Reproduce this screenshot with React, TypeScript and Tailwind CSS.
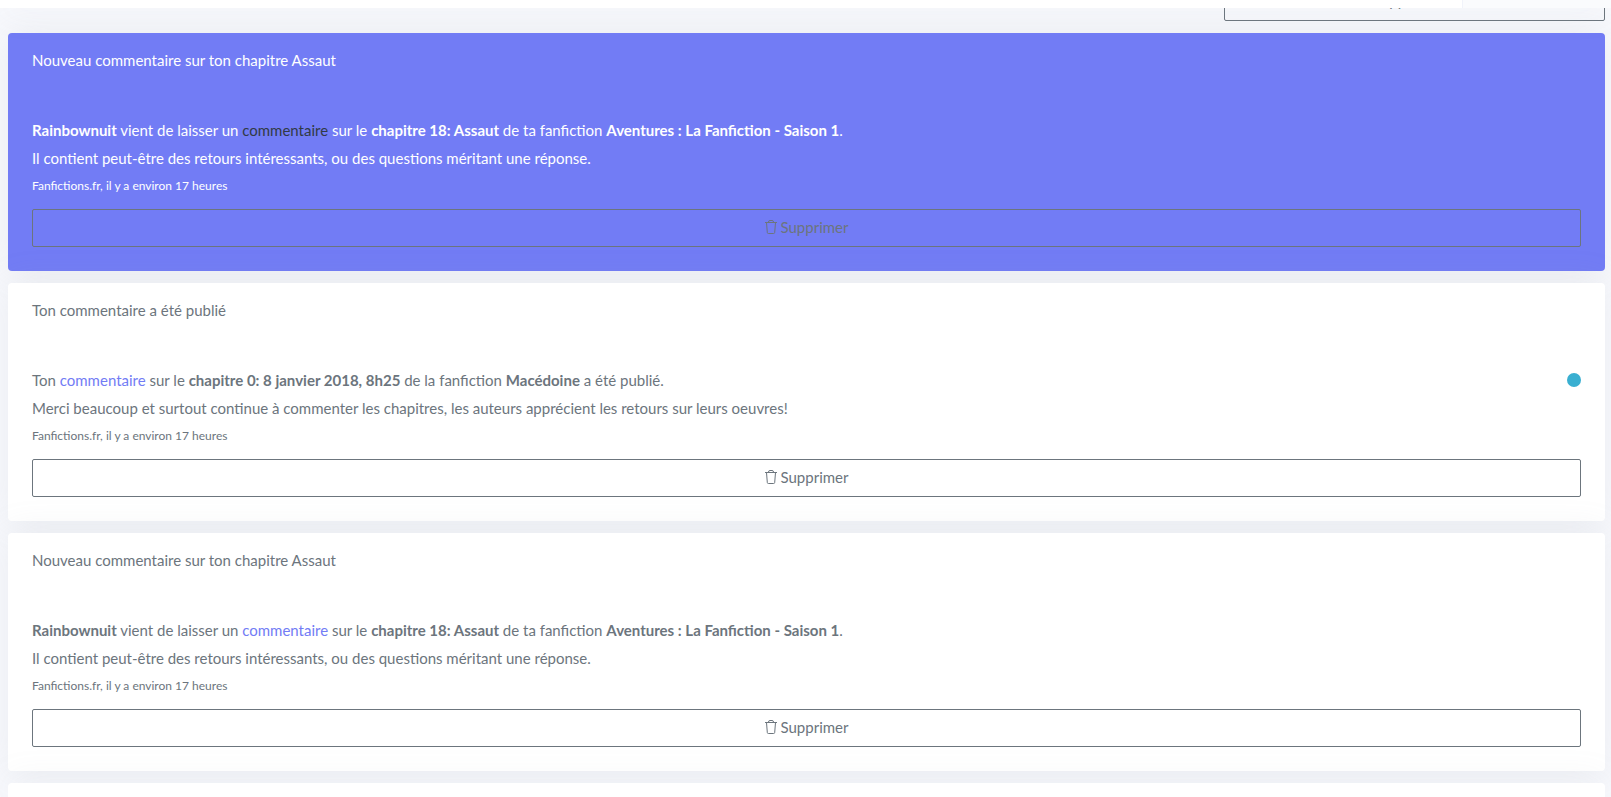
import type { ReactNode } from "react";
import clsx from "clsx";

type Notification = {
  id: number;
  title: string;
  unread?: boolean;
  badge?: boolean;
  message: ReactNode;
  detail: string;
};

function CommentLink({ unread }: { unread?: boolean }) {
  return (
    <a href="#commentaire" className={unread ? "text-[#313a46]" : "text-[#727cf5]"}>
      commentaire
    </a>
  );
}

function chapterMessage(unread?: boolean) {
  return (
    <>
      <strong>Rainbownuit</strong> vient de laisser un <CommentLink unread={unread} /> sur le{" "}
      <strong>chapitre 18: Assaut</strong> de ta fanfiction{" "}
      <strong>Aventures : La Fanfiction - Saison 1</strong>.
    </>
  );
}

const notifications: Notification[] = [
  {
    id: 1,
    title: "Nouveau commentaire sur ton chapitre Assaut",
    unread: true,
    message: chapterMessage(true),
    detail: "Il contient peut-être des retours intéressants, ou des questions méritant une réponse.",
  },
  {
    id: 2,
    title: "Ton commentaire a été publié",
    badge: true,
    message: (
      <>
        Ton <CommentLink /> sur le <strong>chapitre 0: 8 janvier 2018, 8h25</strong> de la
        fanfiction <strong>Macédoine</strong> a été publié.
      </>
    ),
    detail:
      "Merci beaucoup et surtout continue à commenter les chapitres, les auteurs apprécient les retours sur leurs oeuvres!",
  },
  {
    id: 3,
    title: "Nouveau commentaire sur ton chapitre Assaut",
    message: chapterMessage(),
    detail: "Il contient peut-être des retours intéressants, ou des questions méritant une réponse.",
  },
];

function TrashIcon() {
  return (
    <svg viewBox="0 0 12 14" className="h-3.5 w-3" fill="none" stroke="currentColor" aria-hidden="true">
      <path d="M0 2.5h12M3.5 2q0-1.5 1.5-1.5h2q1.5 0 1.5 1.5M1.5 2.5l.8 10q.1 1 1 1h5.4q.9 0 1-1l.8-10" />
    </svg>
  );
}

function NotificationCard({ notification }: { notification: Notification }) {
  const { title, unread, badge, message, detail } = notification;

  return (
    <article
      className={clsx(
        "rounded px-6 pt-[15px] pb-6 shadow-[0_0_35px_0_rgba(154,161,171,0.15)]",
        unread ? "bg-[#727cf5] text-white" : "bg-white"
      )}
    >
      <h2 className="leading-6">{title}</h2>
      <div className="mt-11 flex items-center justify-between leading-7">
        <p>{message}</p>
        {badge ? <span className="h-3.5 w-3.5 rounded-full bg-[#39afd1]" /> : null}
      </div>
      <p className="leading-7">{detail}</p>
      <p className="text-[12px] leading-7">Fanfictions.fr, il y a environ 17 heures</p>
      <button
        type="button"
        className="mt-[9px] flex h-[38px] w-full items-center justify-center gap-1 rounded-xs border border-[#6c757d] pb-0.5 text-[#6c757d]"
      >
        <TrashIcon />
        Supprimer
      </button>
    </article>
  );
}

export default function App() {
  return (
    <div className="flex h-screen flex-col overflow-hidden bg-[#f8f9fd] font-['Lato',sans-serif] text-[15px] text-[#6c757d]">
      <header className="relative z-10 flex h-2 shrink-0 bg-white shadow-[0_0_35px_0_rgba(154,161,171,0.15)]">
        <div className="ml-auto w-[149px] border-l border-[#f1f3fa] bg-[#fafbfd]" />
      </header>
      <main className="flex flex-1 flex-col pr-1.5 pl-2">
        <div className="flex h-[13px] items-end justify-end">
          <button
            type="button"
            className="flex h-[38px] w-[381px] shrink-0 items-center justify-center gap-1 rounded-xs border border-[#6c757d] pb-1"
          >
            <TrashIcon />
            Supprimer tout
          </button>
        </div>
        <div className="mt-3 flex flex-1 flex-col gap-3">
          {notifications.map((notification) => (
            <NotificationCard key={notification.id} notification={notification} />
          ))}
          <article className="flex-1 rounded-t bg-white shadow-[0_0_35px_0_rgba(154,161,171,0.15)]" />
        </div>
      </main>
    </div>
  );
}
